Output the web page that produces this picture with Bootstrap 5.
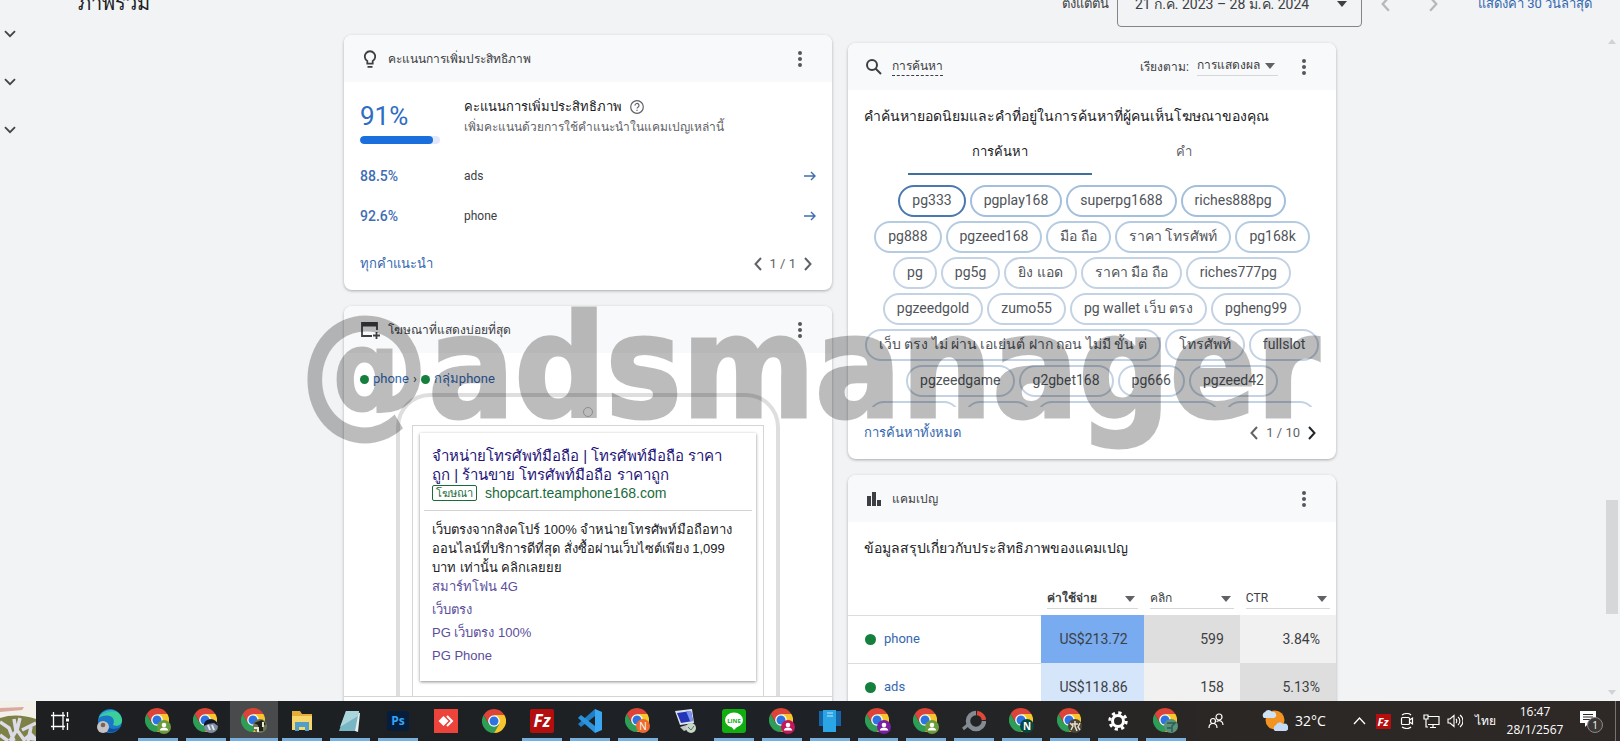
<!DOCTYPE html>
<html lang="th">
<head>
<meta charset="utf-8">
<meta name="viewport" content="width=device-width, initial-scale=1">
<title>ภาพรวม</title>
<link rel="stylesheet" href="https://cdn.jsdelivr.net/npm/bootstrap@5.3.0/dist/css/bootstrap.min.css">
<style>
  body { font-family: Roboto, "Liberation Sans", sans-serif; font-size: 13px; line-height: 20px; color: #3c4043; background: #f1f3f4; }
  a { color: #3367b0; text-decoration: none; }
  button { color: inherit; }
  svg { display: block; flex: none; }
  .plain { border: 0; background: none; padding: 0; }

  .side-nav { width: 76px; padding: 22px 0 0 0; gap: 24px; color: #444; }
  .side-nav button { width: 16px; height: 24px; }
  .scroll-rail { width: 16px; padding: 39px 2px 6px; color: #d0d3d6; }
  .scroll-rail .thumb { width: 12px; height: 114px; background: #d5d7d9; margin-bottom: 76px; }

  .top-row { height: 27px; padding: 0 12px 0 2px; }
  .top-row h1 { font-size: 20px; line-height: 28px; color: #202124; margin-bottom: 10px; }
  .top-row .range-label, .top-row .range-link { line-height: 20px; margin-bottom: 13px; font-size: 13px; }
  .top-row .range-link { margin-left: 20px; }
  .range-btn { height: 46px; width: 245px; border: 1px solid #80868b; border-radius: 4px; font-size: 14px; padding: 0 14px 0 17px; }
  .step-btn { height: 46px; width: 48px; color: #b5b8bb; }

  .board { max-width: 992px; gap: 16px; padding-top: 8px; }
  .board > div { flex: 1 1 0; min-width: 0; gap: 16px; }
  .board > .shifted { padding-top: 8px; }
  .panel { background: #fff; border-radius: 8px; box-shadow: 0 1px 3px rgba(60,64,67,.4); }
  .panel-head { height: 47px; background: #f8f9fa; border-radius: 8px 8px 0 0; padding: 0 22px 0 16px; font-size: 12px; color: #3c4043; gap: 8px; }
  .panel h2 { font-size: 14px; line-height: 20px; color: #202124; margin: 0; }
  .more-btn { width: 20px; color: #54585c; margin-left: 8px; }
  .pager { gap: 8px; color: #5f6368; }

  .score-top { padding: 14px 0 12px; }
  .score-top h2 { font-size: 13px; line-height: 22px; }
  .score-col { width: 104px; }
  .score-num { font-size: 26px; line-height: 32px; color: #2f6cc4; }
  .score-note { font-size: 12px; line-height: 18px; color: #5f6368; }
  .score-foot { padding-top: 18px; }
  .meter-line { width: 80px; height: 8px; border-radius: 4px; background: #e3e9fb; margin-top: 4px; }
  .meter-line .progress-bar { background: #1a6fdc; border-radius: 4px; }
  .score-row { height: 40px; font-size: 12px; }
  .score-row b { font-weight: 500; font-size: 14px; color: #3f6db3; }

  .pick { appearance: none; border: 0; border-bottom: 1px solid #d5d7da; border-radius: 0; color: inherit; font-size: 12px; line-height: 16px; padding: 0 18px 2px 0;
    background: url("data:image/svg+xml,%3Csvg xmlns='http://www.w3.org/2000/svg' width='10' height='6'%3E%3Cpath d='M0 0h10L5 6z' fill='%235f6368'/%3E%3C/svg%3E") no-repeat right 3px top 6px; }
  .search-name { border-bottom: 1px dashed #3c4043; line-height: 17px; }
  .tab-line { margin-bottom: 10px; }
  .tab-btn { width: 184px; height: 33px; font-size: 13px; color: #5f6368; border-bottom: 2px solid transparent; padding-bottom: 11px; }
  .tab-btn.active { color: #202124; border-bottom-color: #3f6f9c; }
  .chip-box { height: 222px; gap: 4px; overflow: hidden; }
  .chip-row { gap: 4px; flex: none; }
  .chip { height: 32px; border: 2px solid #c3d3e4; border-radius: 16px; background: #fff; padding: 0 12px 2px; font-size: 14px; line-height: 24px; color: #50545a; white-space: nowrap; }
  .chip.lv-1 { border-color: #4a78b0; }
  .chip.lv-2 { border-color: #a3bfdc; }
  .chip.lv-3 { border-color: #b5cbe2; }
  .chip.w-s { width: 68px; } .chip.w-m { width: 92px; } .chip.w-l { width: 184px; }

  .dot-on { width: 9px; height: 9px; border-radius: 50%; background: #15803d; flex: none; }
  .camp .dot-on { width: 11px; height: 11px; }
  .phone-clip { border-bottom: 1px solid #d5d5d5; }
  .phone-frame { width: 384px; height: 303px; border: 4px solid #dedede; border-bottom: 0; border-radius: 34px 34px 0 0; padding: 0 12px; }
  .speaker { width: 10px; height: 10px; border: 1px solid #bdbdbd; border-radius: 50%; margin: 10px auto 8px; }
  .screen { border: 1px solid #d5d5d5; border-bottom: 0; padding: 7px 7px 0; height: 271px; }
  .ad-box { box-shadow: 0 1px 3px rgba(0,0,0,.45); padding: 13px 4px 12px; color: #202124; font-family: "Liberation Sans", sans-serif; white-space: nowrap; }
  .ad-box .ad-title { font-size: 15px; line-height: 19px; color: #1f1478; }
  .ad-box .inset { padding: 0 8px; }
  .ad-tag { border: 1px solid #1b6b3a; border-radius: 2px; color: #1b6b3a; font-size: 11px; line-height: 14px; padding: 0 3px; }
  .ad-url { font-size: 14px; line-height: 18px; color: #1b6b3a; }
  .ad-rule { border-top: 1px solid #d2d2d2; margin: 8px 0 9px; }
  .ad-text { font-size: 13px; line-height: 19px; }
  .ad-links a { color: #5a4e9c; display: block; line-height: 20px; margin-bottom: 3px; font-size: 13px; }

  .camp { width: 100%; table-layout: fixed; border-collapse: collapse; font-size: 14px; }
  .camp th { height: 49px; vertical-align: bottom; padding: 0 6px 6px; font-weight: 400; }
  .camp th .pick { width: 100%; }
  .camp td { height: 48px; padding: 0 16px; text-align: right; }
  .camp td:first-child { border-top: 1px solid #dadce0; text-align: left; padding-left: 17px; font-size: 13px; }
  .c-hot { background: #78abf0; } .c-warm { background: #d5e5fa; } .c-grey { background: #dedede; } .c-pale { background: #f1f1f1; }

  .mark-text { top: 272px; left: 0; right: 0; text-align: center; font: 700 142px/192px "DejaVu Sans Condensed", "DejaVu Sans", sans-serif; color: #000; -webkit-text-stroke: 3px #000; opacity: .26; pointer-events: none; white-space: nowrap; z-index: 5; }

  .task-strip { height: 40px; background: linear-gradient(90deg, #1d1f21, #1e2226 50%, #2a2725 75%, #2e2926); color: #fff; z-index: 6; font-family: "Open Sans", "Liberation Sans", sans-serif; font-size: 12px; }
  .task-btn { width: 48px; height: 40px; flex: none; display: flex; align-items: center; justify-content: center; position: relative; }
  .task-btn.open::after { content: ""; position: absolute; left: 4px; right: 4px; bottom: 0; height: 3px; background: #77afdf; }
  .task-btn.front { background: #484a4c; }
  .task-btn.front::after { left: 0; right: 0; }
  .task-btn.view { margin-right: 2px; }
  .tray { padding-right: 2px; margin-right: 4px; border-right: 1px solid #77726f; }
  .tray button { width: 24px; height: 40px; display: flex; align-items: center; justify-content: center; }
  .tray .people { margin-right: 34px; }
  .tray .degrees { font-size: 14px; margin: 0 20px 0 7px; width: 32px; white-space: nowrap; }
  .tray .lang { width: 36px; }
  .tray .bell { width: 46px; }
  .clock { width: 64px; line-height: 18px; font-size: 12px; }
</style>
</head>
<body class="vh-100 d-flex flex-column overflow-hidden position-relative">

<svg width="0" height="0" class="position-absolute" aria-hidden="true">
  <symbol id="down" viewBox="0 0 12 8"><path d="M1 1.2l5 5 5-5" fill="none" stroke="currentColor" stroke-width="1.8"/></symbol>
  <symbol id="left" viewBox="0 0 8 14"><path d="M7 1L1.5 7 7 13" fill="none" stroke="currentColor" stroke-width="2"/></symbol>
  <symbol id="right" viewBox="0 0 8 14"><path d="M1 1l5.5 6L1 13" fill="none" stroke="currentColor" stroke-width="2"/></symbol>
  <symbol id="more" viewBox="0 0 4 16"><circle cx="2" cy="2" r="2"/><circle cx="2" cy="8" r="2"/><circle cx="2" cy="14" r="2"/></symbol>
  <symbol id="go" viewBox="0 0 12 10"><path d="M0 5h10.5M7 1l4 4-4 4" fill="none" stroke="#3f6db3" stroke-width="1.4"/></symbol>
  <symbol id="chrome" viewBox="0 0 24 24">
    <path fill="#db4437" d="M12 0A12 12 0 0 1 22.4 6H12L6.8 15 1.6 6A12 12 0 0 1 12 0z"/>
    <path fill="#2e9e57" d="M1.6 6A12 12 0 0 0 12 24l5.2-9H6.8z"/>
    <path fill="#f7c52c" d="M22.4 6A12 12 0 0 1 12 24l5.2-9L12 6z"/>
    <circle cx="12" cy="12" r="5.8" fill="#fff"/><circle cx="12" cy="12" r="4.5" fill="#2f73e0"/>
  </symbol>
  <symbol id="face" viewBox="0 0 14 14"><circle cx="7" cy="7" r="7" fill="currentColor"/><circle cx="7" cy="5" r="2.3" fill="#fff"/><path d="M2.8 10.6c0-4 8.4-4 8.4 0z" fill="#fff"/></symbol>
</svg>

<div class="flex-grow-1 d-flex overflow-hidden">
  <nav class="side-nav d-flex flex-column flex-shrink-0" aria-label="เมนู">
    <button class="plain d-flex align-items-center justify-content-end" aria-label="ขยาย"><svg width="12" height="8"><use href="#down"/></svg></button>
    <button class="plain d-flex align-items-center justify-content-end" aria-label="ขยาย"><svg width="12" height="8"><use href="#down"/></svg></button>
    <button class="plain d-flex align-items-center justify-content-end" aria-label="ขยาย"><svg width="12" height="8"><use href="#down"/></svg></button>
  </nav>

  <main class="flex-grow-1">
    <header class="top-row d-flex align-items-end">
      <h1 class="me-auto">ภาพรวม</h1>
      <span class="range-label me-2">ตั้งแต่ต้น</span>
      <button class="plain range-btn d-flex align-items-center justify-content-between">21 ก.ค. 2023 – 28 ม.ค. 2024
        <svg width="10" height="6"><path d="M0 0h10L5 6z" fill="#3c4043"/></svg></button>
      <button class="plain step-btn d-flex align-items-center justify-content-center" aria-label="ก่อนหน้า"><svg width="9" height="16" viewBox="0 0 8 14"><use href="#left"/></svg></button>
      <button class="plain step-btn d-flex align-items-center justify-content-center" aria-label="ถัดไป"><svg width="9" height="16" viewBox="0 0 8 14"><use href="#right"/></svg></button>
      <a href="#" class="range-link">แสดงค่า 30 วันล่าสุด</a>
    </header>

    <div class="board d-flex mx-auto align-items-start">
      <div class="d-flex flex-column">
        <section class="panel">
          <div class="panel-head d-flex align-items-center">
            <svg width="20" height="20" viewBox="0 0 20 20" fill="none" stroke="#3c4043" stroke-width="1.8"><path d="M7.3 14.6v-2.7a5.2 5.2 0 1 1 5.400 0v2.700zM7.500 17.800h5"/></svg>
            <span class="me-auto">คะแนนการเพิ่มประสิทธิภาพ</span>
            <button class="plain more-btn d-flex justify-content-center" aria-label="เพิ่มเติม"><svg width="4" height="16" fill="currentColor"><use href="#more"/></svg></button>
          </div>
          <div class="px-3 pb-3">
            <div class="score-top d-flex">
              <div class="score-col">
                <div class="score-num mt-1">91%</div>
                <div class="meter-line progress"><div class="progress-bar" style="width:91%"></div></div>
              </div>
              <div>
                <h2 class="d-flex align-items-center">คะแนนการเพิ่มประสิทธิภาพ
                  <svg class="ms-2" width="14" height="14" viewBox="0 0 14 14" fill="none" stroke="#5f6368" stroke-width="1.200"><circle cx="7" cy="7" r="6.300"/><path d="M5 5.600a2 2 0 1 1 3 1.600c-.8.500-1 .8-1 1.400M7 9.800v1.200"/></svg></h2>
                <div class="score-note">เพิ่มคะแนนด้วยการใช้คำแนะนำในแคมเปญเหล่านี้</div>
              </div>
            </div>
            <div class="score-row d-flex align-items-center"><b class="score-col">88.5%</b><span class="me-auto">ads</span><a href="#" aria-label="ads"><svg width="12" height="10"><use href="#go"/></svg></a></div>
            <div class="score-row d-flex align-items-center"><b class="score-col">92.6%</b><span class="me-auto">phone</span><a href="#" aria-label="phone"><svg width="12" height="10"><use href="#go"/></svg></a></div>
            <div class="score-foot d-flex align-items-center">
              <a href="#" class="me-auto">ทุกคำแนะนำ</a>
              <div class="pager d-flex align-items-center me-1">
                <button class="plain" aria-label="ก่อนหน้า"><svg width="8" height="14"><use href="#left"/></svg></button><span>1 / 1</span>
                <button class="plain" aria-label="ถัดไป"><svg width="8" height="14"><use href="#right"/></svg></button>
              </div>
            </div>
          </div>
        </section>

        <section class="panel">
          <div class="panel-head d-flex align-items-center">
            <svg width="20" height="18" viewBox="0 0 20 18" fill="none" stroke="#3c4043" stroke-width="1.800"><path d="M17 9V2H2v13h10M16.500 11v7M13 14.500h7"/><path d="M2 3.500h15" stroke-width="4"/></svg>
            <span class="me-auto">โฆษณาที่แสดงบ่อยที่สุด</span>
            <button class="plain more-btn d-flex justify-content-center" aria-label="เพิ่มเติม"><svg width="4" height="16" fill="currentColor"><use href="#more"/></svg></button>
          </div>
          <div class="d-flex align-items-center px-3 pt-3 pb-1 gap-1">
            <span class="dot-on"></span><a href="#">phone</a><span>›</span><span class="dot-on"></span><a href="#">กลุ่มphone</a>
          </div>
          <div class="phone-clip">
            <div class="phone-frame mx-auto">
              <div class="speaker"></div>
              <div class="screen">
                <div class="ad-box">
                  <div class="inset">
                    <a href="#" class="ad-title d-block">จำหน่ายโทรศัพท์มือถือ | โทรศัพท์มือถือ ราคา<br>ถูก | ร้านขาย โทรศัพท์มือถือ ราคาถูก</a>
                    <div class="d-flex align-items-center gap-2"><span class="ad-tag">โฆษณา</span><span class="ad-url">shopcart.teamphone168.com</span></div>
                  </div>
                  <div class="ad-rule"></div>
                  <div class="inset">
                    <div class="ad-text">เว็บตรงจากสิงคโปร์ 100% จำหน่ายโทรศัพท์มือถือทาง<br>ออนไลน์ที่บริการดีที่สุด สั่งซื้อผ่านเว็บไซต์เพียง 1,099<br>บาท เท่านั้น คลิกเลยยย</div>
                    <div class="ad-links"><a href="#">สมาร์ทโฟน 4G</a><a href="#">เว็บตรง</a><a href="#">PG เว็บตรง 100%</a><a href="#">PG Phone</a></div>
                  </div>
                </div>
              </div>
            </div>
          </div>
          <div class="py-2"></div>
        </section>
      </div>

      <div class="shifted d-flex flex-column">
        <section class="panel">
          <div class="panel-head d-flex align-items-center">
            <svg width="20" height="18" viewBox="0 0 20 18" fill="none" stroke="#3c4043" stroke-width="2"><circle cx="8" cy="7" r="5"/><path d="M11.500 10.500l5.500 5.500"/></svg>
            <span class="search-name me-auto">การค้นหา</span>
            <label for="order">เรียงตาม:</label>
            <select class="pick" id="order"><option>การแสดงผล</option></select>
            <button class="plain more-btn d-flex justify-content-center" aria-label="เพิ่มเติม"><svg width="4" height="16" fill="currentColor"><use href="#more"/></svg></button>
          </div>
          <div class="px-3 pb-3">
            <h2 class="pt-3">คำค้นหายอดนิยมและคำที่อยู่ในการค้นหาที่ผู้คนเห็นโฆษณาของคุณ</h2>
            <div class="tab-line d-flex justify-content-center pt-3">
              <button class="plain tab-btn active">การค้นหา</button><button class="plain tab-btn">คำ</button>
            </div>
            <div class="chip-box d-flex flex-column">
              <div class="chip-row d-flex justify-content-center"><button class="chip lv-1">pg333</button><button class="chip lv-2">pgplay168</button><button class="chip lv-2">superpg1688</button><button class="chip lv-2">riches888pg</button></div>
              <div class="chip-row d-flex justify-content-center"><button class="chip lv-3">pg888</button><button class="chip lv-3">pgzeed168</button><button class="chip lv-3">มือ ถือ</button><button class="chip lv-3">ราคา โทรศัพท์</button><button class="chip lv-3">pg168k</button></div>
              <div class="chip-row d-flex justify-content-center"><button class="chip">pg</button><button class="chip">pg5g</button><button class="chip">ยิง แอด</button><button class="chip">ราคา มือ ถือ</button><button class="chip">riches777pg</button></div>
              <div class="chip-row d-flex justify-content-center"><button class="chip">pgzeedgold</button><button class="chip">zumo55</button><button class="chip">pg wallet เว็บ ตรง</button><button class="chip">pgheng99</button></div>
              <div class="chip-row d-flex justify-content-center"><button class="chip">เว็บ ตรง ไม่ ผ่าน เอเย่นต์ ฝาก ถอน ไม่มี ขั้น ต่</button><button class="chip">โทรศัพท์</button><button class="chip">fullslot</button></div>
              <div class="chip-row d-flex justify-content-center"><button class="chip">pgzeedgame</button><button class="chip">g2gbet168</button><button class="chip">pg666</button><button class="chip">pgzeed42</button></div>
              <div class="chip-row d-flex justify-content-center" aria-hidden="true"><span class="chip w-m"></span><span class="chip w-s"></span><span class="chip w-l"></span><span class="chip w-m"></span></div>
            </div>
            <div class="d-flex align-items-center pt-3">
              <a href="#" class="me-auto">การค้นหาทั้งหมด</a>
              <div class="pager d-flex align-items-center me-1">
                <button class="plain" aria-label="ก่อนหน้า"><svg width="8" height="14"><use href="#left"/></svg></button><span>1 / 10</span>
                <button class="plain text-dark" aria-label="ถัดไป"><svg width="8" height="14"><use href="#right"/></svg></button>
              </div>
            </div>
          </div>
        </section>

        <section class="panel">
          <div class="panel-head d-flex align-items-center">
            <svg width="20" height="16" viewBox="0 0 20 16" fill="#3c4043"><path d="M3 5h4v10H3zM8 1h4v14H8zM13 9h4v6h-4z"/></svg>
            <span class="me-auto">แคมเปญ</span>
            <button class="plain more-btn d-flex justify-content-center" aria-label="เพิ่มเติม"><svg width="4" height="16" fill="currentColor"><use href="#more"/></svg></button>
          </div>
          <h2 class="px-3 pt-3 mb-2">ข้อมูลสรุปเกี่ยวกับประสิทธิภาพของแคมเปญ</h2>
          <table class="camp">
            <colgroup><col style="width:39.6%"><col style="width:21%"><col style="width:19.7%"><col style="width:19.7%"></colgroup>
            <thead><tr><th></th>
              <th><select class="pick fw-bold" aria-label="เมตริก 1"><option>ค่าใช้จ่าย</option></select></th>
              <th><select class="pick" aria-label="เมตริก 2"><option>คลิก</option></select></th>
              <th><select class="pick" aria-label="เมตริก 3"><option>CTR</option></select></th></tr></thead>
            <tbody>
              <tr><td><a href="#" class="d-flex align-items-center gap-2"><span class="dot-on"></span>phone</a></td><td class="c-hot">US$213.72</td><td class="c-grey">599</td><td class="c-pale">3.84%</td></tr>
              <tr><td><a href="#" class="d-flex align-items-center gap-2"><span class="dot-on"></span>ads</a></td><td class="c-warm">US$118.86</td><td class="c-pale">158</td><td class="c-grey">5.13%</td></tr>
            </tbody>
          </table>
        </section>
      </div>
    </div>
  </main>

  <div class="scroll-rail d-flex flex-column align-items-center flex-shrink-0">
    <svg width="8" height="5"><path d="M0 5h8L4 0z" fill="currentColor"/></svg>
    <div class="thumb mt-auto"></div>
    <svg width="8" height="5"><path d="M0 0h8L4 5z" fill="currentColor"/></svg>
  </div>
</div>

<div class="mark-text position-absolute">@adsmanager</div>

<footer class="task-strip d-flex flex-shrink-0 align-items-center">
  <svg width="36" height="40" viewBox="0 0 36 40"><path fill="#f3efe9" d="M0 0h36v40H0z"/><path d="M0 7l24-1-2 3-22 2z" fill="#d9a9a0"/><path d="M0 17c12-4 24-3 36 1v22H0z" fill="#7d8148"/><path d="M0 21l9 6 5 13M14 18l2 12-6 10M20 17l-3 12 8 11M36 22l-14 7M31 26l-3 14M0 34l8 6" stroke="#dcdbe6" stroke-width="3.500" fill="none"/><path d="M22 38l9-7 5 5v4z" fill="#dcdbe6"/></svg>
  <button class="plain task-btn view" aria-label="มุมมองงาน"><svg width="18" height="18" viewBox="0 0 18 18" fill="none" stroke="#fff" stroke-width="1.300"><path d="M2.500 0v4M12 0v4M2.500 14v4M12 14v4M0 3.500h14M0 14.500h14M2.500 4v10M12 4v10M16.500 0v5M16.500 11v7"/><path d="M15 6.500h3v3h-3z" fill="#fff" stroke="none"/></svg></button>
  <button class="plain task-btn" aria-label="Edge"><svg width="26" height="26" viewBox="0 0 26 26"><circle cx="13" cy="13" r="12" fill="#1b78c8"/><path d="M2 10C4 1 22-2 25 11c1 6-5 8-9 6 4-9-7-12-14-7z" fill="#3ccf9a"/><path d="M2 10C5 3 14 1 20 4c-9-1-16 3-18 6z" fill="#2db3d8"/><path d="M9 13c0 8 8 10 14 6-3 5-10 7-14 3-3-3-3-7 0-9z" fill="#0f4f9c"/><circle cx="6" cy="19" r="6" fill="#c5c1c4"/><circle cx="6" cy="17" r="2.300" fill="#7a6255"/></svg></button>
  <button class="plain task-btn open" aria-label="Chrome"><svg width="26" height="26"><use href="#chrome" width="24" height="24"/><use href="#face" x="12" y="12" width="14" height="14" color="#6a9c3c"/></svg></button>
  <button class="plain task-btn open" aria-label="Chrome"><svg width="26" height="26"><use href="#chrome" width="24" height="24"/><circle cx="18" cy="18" r="7" fill="#7f8da1"/><path d="M11 18c-1-9 14-9 14 0l-4-3-6 1z" fill="#111827"/><path d="M15 17l2 5M19 17l2 5" stroke="#e4e8ee" stroke-width="2"/></svg></button>
  <button class="plain task-btn open front" aria-label="Chrome"><svg width="26" height="26"><use href="#chrome" width="24" height="24"/><circle cx="19" cy="18" r="7" fill="#6c7454"/><path d="M13 15l8-3 4 4-3 2v5h-4l-1-6z" fill="#20231d"/><path d="M13 20h4v4M22 14v5" stroke="#ece9cf" stroke-width="2" fill="none"/></svg></button>
  <button class="plain task-btn open" aria-label="File Explorer"><svg width="24" height="22" viewBox="0 0 24 22"><path d="M2 1h8l2 3h10v16H2z" fill="#e5ae38"/><path d="M2 6h20v14H2z" fill="#f9d66b"/><path d="M5 12h14v9h-4v-4H9v4H5z" fill="#4f9fc9"/></svg></button>
  <button class="plain task-btn open" aria-label="Notepad"><svg width="24" height="24" viewBox="0 0 24 24"><path d="M8 2l14 2-2 19-3-1z" fill="#e8eef0"/><path d="M8 2h13l-4 20H1z" fill="#79b6c3"/><path d="M8 2h13l-1 5L2 18z" fill="#abd5dc"/></svg></button>
  <button class="plain task-btn open" aria-label="Photoshop"><svg width="22" height="20"><rect width="22" height="20" rx="3" fill="#061e3c"/><text x="11" y="14" font-size="12" font-weight="700" fill="#36a4f5" text-anchor="middle">Ps</text></svg></button>
  <button class="plain task-btn" aria-label="AnyDesk"><svg width="24" height="24"><path fill="#ec443b" d="M0 0h24v24H0z"/><path d="M9.500 7l5 5-5 5-5-5z" fill="#fff"/><path d="M13 7l5 5-5 5" fill="none" stroke="#fff" stroke-width="2"/></svg></button>
  <button class="plain task-btn" aria-label="Chrome"><svg width="24" height="24"><use href="#chrome"/></svg></button>
  <button class="plain task-btn open" aria-label="FileZilla"><svg width="24" height="24"><rect width="24" height="24" rx="2" fill="#b40e0e"/><text x="12" y="18" font-size="17" font-weight="700" font-style="italic" fill="#fff" text-anchor="middle">Fz</text></svg></button>
  <button class="plain task-btn open" aria-label="VS Code"><svg width="24" height="24" viewBox="0 0 24 24"><path d="M17 0l7 3v18l-7 3z" fill="#3ba7f0"/><path d="M17 0v7L3 18l-3-3z" fill="#1f80c8"/><path d="M17 24v-7L3 6 0 9z" fill="#2c94dc"/></svg></button>
  <button class="plain task-btn open" aria-label="Chrome"><svg width="26" height="26"><use href="#chrome" width="24" height="24"/><circle cx="18" cy="18" r="7" fill="#ee6a2c"/><text x="18" y="22" font-size="10" fill="#fff" text-anchor="middle">N</text></svg></button>
  <button class="plain task-btn" aria-label="Remote"><svg width="24" height="24" viewBox="0 0 24 24"><path d="M1 2l17-2 2 14-14 2z" fill="#dfe3f0"/><path d="M3 4l14-2 2 10-12 2z" fill="#2436b8"/><path d="M12 2l5 0 2 10-3 0z" fill="#7c94ee"/><path d="M6 18l10-3 4 3-10 4z" fill="#c4c6c4"/><circle cx="17" cy="19" r="5" fill="#c9d4c8"/><path d="M14 18l3 3 3-4" stroke="#4d7c4e" fill="none"/></svg></button>
  <button class="plain task-btn open" aria-label="LINE"><svg width="24" height="24"><rect width="24" height="24" rx="3" fill="#12ad10"/><ellipse cx="12" cy="11" rx="9" ry="7.500" fill="#fff"/><path d="M9 17l3 4 5-5z" fill="#fff"/><text x="12" y="13.500" font-size="6" font-weight="700" fill="#12ad10" text-anchor="middle">LINE</text></svg></button>
  <button class="plain task-btn open" aria-label="Chrome"><svg width="26" height="26"><use href="#chrome" width="24" height="24"/><use href="#face" x="12" y="12" width="14" height="14" color="#c2185b"/></svg></button>
  <button class="plain task-btn open" aria-label="Phone"><svg width="22" height="22"><path d="M0 1h22v15H0z" fill="#1565a8"/><path d="M4 0h13v22H4z" fill="#2aa5e6"/><path d="M8 3h6M8 6h6" stroke="#bfe6fa"/></svg></button>
  <button class="plain task-btn open" aria-label="Chrome"><svg width="26" height="26"><use href="#chrome" width="24" height="24"/><use href="#face" x="12" y="12" width="14" height="14" color="#7b1fa2"/></svg></button>
  <button class="plain task-btn open" aria-label="Chrome"><svg width="26" height="26"><use href="#chrome" width="24" height="24"/><use href="#face" x="12" y="12" width="14" height="14" color="#6a9c3c"/></svg></button>
  <button class="plain task-btn open" aria-label="OpenBullet"><svg width="24" height="22" viewBox="0 0 24 22" fill="none" stroke-width="4.500"><path d="M14 3a8 8 0 1 0 8 8" stroke="#858b92"/><path d="M15 3a8 8 0 0 1 7 7" stroke="#e0483a"/><path d="M1 19l6-5" stroke="#858b92" stroke-width="3"/></svg></button>
  <button class="plain task-btn open" aria-label="Chrome"><svg width="26" height="26"><use href="#chrome" width="24" height="24"/><circle cx="18" cy="18" r="7" fill="#04483f"/><text x="18" y="22" font-size="10" font-weight="700" fill="#fff" text-anchor="middle">N</text></svg></button>
  <button class="plain task-btn open" aria-label="Chrome"><svg width="26" height="26"><use href="#chrome" width="24" height="24"/><circle cx="18" cy="18" r="7" fill="#4a4439"/><path d="M13 15l3 3-2 4M18 13v5l2 5M23 15l-2 4 2 3M15 16h6" stroke="#e6dfc8" stroke-width="1.500" fill="none"/></svg></button>
  <button class="plain task-btn open" aria-label="Settings"><svg width="20" height="20" viewBox="0 0 20 20" fill="none" stroke="#fff"><circle cx="10" cy="10" r="5.500" stroke-width="3"/><circle cx="10" cy="10" r="8.200" stroke-width="3" stroke-dasharray="3.220 3.220"/></svg></button>
  <button class="plain task-btn open" aria-label="Chrome"><svg width="26" height="26"><use href="#chrome" width="24" height="24"/><circle cx="18" cy="18" r="7" fill="#5b927a"/><path d="M14 15h8l-3 3v6M14 20h4" stroke="#2c5b54" stroke-width="1.500" fill="none"/></svg></button>

  <div class="tray d-flex align-items-center ms-auto">
    <button class="plain people" aria-label="ผู้ติดต่อ"><svg width="16" height="16" viewBox="0 0 16 16" fill="none" stroke="#fff" stroke-width="1.200"><circle cx="11" cy="4" r="3"/><circle cx="5" cy="8" r="2.500"/><path d="M1 15c0-6 8-6 8 0M8.500 8.500c4-2 6.500 0 6.500 3.500"/></svg></button>
    <svg width="26" height="24" viewBox="0 0 26 24"><circle cx="13" cy="11" r="9.500" fill="#f39321"/><path d="M2 9a3.500 3.500 0 0 1 1-6 4 4 0 0 1 7 0 3 3 0 0 1 2 6z" fill="#cfe3f7"/><path d="M13 22a3.500 3.500 0 0 1 1-6 4 4 0 0 1 7-1 3.500 3.500 0 0 1 3 7z" fill="#c5dbf5"/></svg>
    <span class="degrees">32°C</span>
    <button class="plain" aria-label="ไอคอนที่ซ่อน"><svg width="13" height="8" viewBox="0 0 13 8"><path d="M1 7l5.500-6L12 7" fill="none" stroke="#fff" stroke-width="1.300"/></svg></button>
    <button class="plain" aria-label="FileZilla"><svg width="15" height="15"><path fill="#b40e0e" d="M0 0h15v15H0z"/><text x="7" y="12" font-size="11" font-weight="700" font-style="italic" fill="#fff" text-anchor="middle">Fz</text></svg></button>
    <button class="plain" aria-label="กล้อง"><svg width="14" height="16" viewBox="0 0 14 16" fill="none" stroke="#fff" stroke-width="1.200"><rect x="1.500" y="4.500" width="8" height="7" rx="1"/><path d="M9.500 7l3-2v6l-3-2M2 2c3-2 7-2 9 0M2 14c3 2 7 2 9 0"/></svg></button>
    <button class="plain" aria-label="เครือข่าย"><svg width="17" height="15" viewBox="0 0 17 15" fill="none" stroke="#fff" stroke-width="1.200"><path d="M5 2.500h11v8H5M10 10.500v3M7 13.500h6M1 1h4v4H1zM3 5v8h2"/></svg></button>
    <button class="plain" aria-label="เสียง"><svg width="16" height="14" viewBox="0 0 16 14" fill="none" stroke="#fff" stroke-width="1.100"><path d="M1 5h2l4-3.500v11L3 9H1zM9 5c1 1 1 3 0 4M11 3c2.500 2 2.500 6 0 8M13 1c4 3 4 9 0 12"/></svg></button>
    <span class="lang text-center">ไทย</span>
    <div class="clock text-center">16:47<br>28/1/2567</div>
    <button class="plain bell" aria-label="การแจ้งเตือน"><svg class="overflow-visible" width="20" height="22" viewBox="0 0 20 22"><path d="M0 1h16v12H9l-4 4v-4H0z" fill="#fff"/><path d="M3 4.500h10M3 7h10M3 9.500h7" stroke="#2e2926"/><circle cx="15" cy="15" r="7.500" fill="#3b3836" stroke="#8b8988"/><text x="15" y="19" font-size="10" fill="#fff" text-anchor="middle">1</text></svg></button>
  </div>
</footer>

<script src="https://cdn.jsdelivr.net/npm/bootstrap@5.3.0/dist/js/bootstrap.bundle.min.js"></script>
</body>
</html>
